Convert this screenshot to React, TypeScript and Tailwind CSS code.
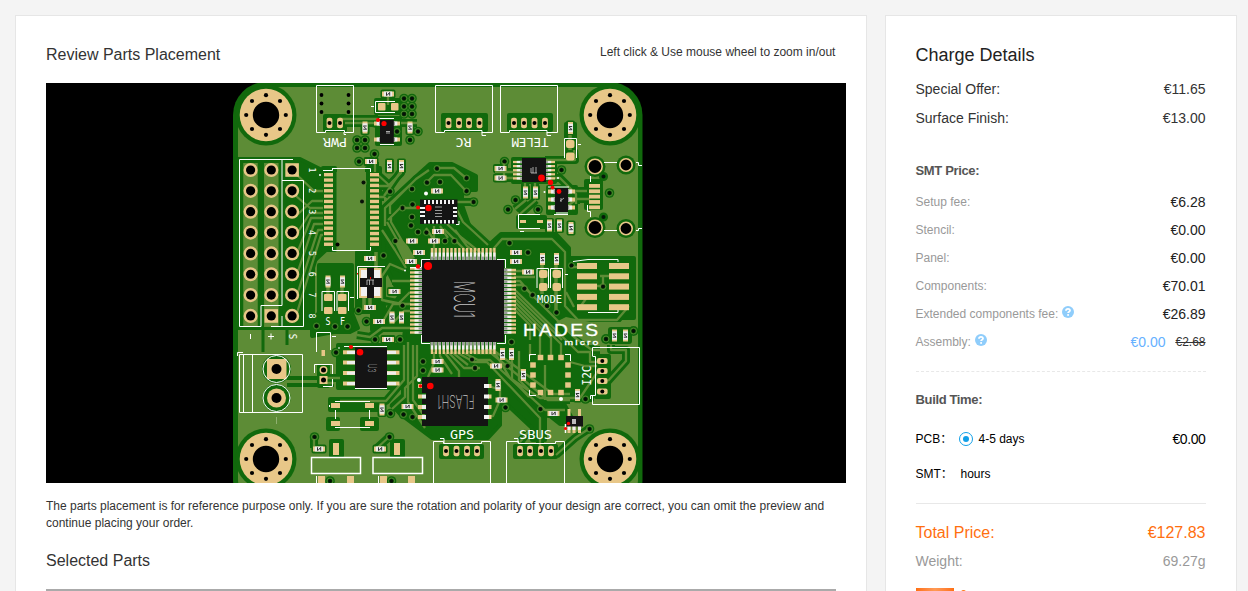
import React from 'react';

const DARK = '#11690c';
const LIGHT = '#5d8c36';
const PAD = '#e8c788';
const BODY = '#141414';

type Pt = [number, number];

const range = (n: number) => Array.from({ length: n }, (_, i) => i);

function Hole({ x, y }: { x: number; y: number }) {
  return (
    <g>
      <circle cx={x} cy={y} r={30.5} fill={DARK} />
      <circle cx={x} cy={y} r={26.3} fill={PAD} />
      <circle cx={x} cy={y} r={13.2} fill="#000" />
      {range(8).map((i) => (
        <circle key={i} cx={x + 19.8 * Math.cos((i * Math.PI) / 4)} cy={y + 19.8 * Math.sin((i * Math.PI) / 4)} r={2.1} fill="#000" />
      ))}
    </g>
  );
}

function Chip({ x, y, v }: { x: number; y: number; v?: boolean }) {
  return (
    <g transform={`translate(${x} ${y})${v ? ' rotate(90)' : ''}`}>
      <rect x={-6} y={-2.5} width={12} height={5} fill={PAD} />
      <rect x={-4.2} y={-2.5} width={8.4} height={5} fill="#ececec" />
      <path d="M-1.500 -1.700v3.400M-1 1.500L1.500 -1.500M1.700 -1.700v3.400" stroke="#333" strokeWidth={1} fill="none" />
    </g>
  );
}

function Silk({ x, y, size, w, rot = 0, color = '#fff', thin, children }: { x: number; y: number; size: number; w: number; rot?: number; color?: string; thin?: boolean; children: string }) {
  return (
    <text
      transform={`translate(${x} ${y}) rotate(${rot})`}
      textAnchor="middle"
      dominantBaseline="central"
      textLength={w}
      lengthAdjust="spacingAndGlyphs"
      fontFamily={thin ? "Inter, 'Liberation Sans', sans-serif" : "'DejaVu Sans Mono', monospace"}
      fontWeight={thin ? 200 : 400}
      fontSize={size}
      fill={color}
    >
      {children}
    </text>
  );
}

function Pin({ x, y, dir, len = 12, t = 2.4 }: { x: number; y: number; dir: number; len?: number; t?: number }) {
  return (
    <g transform={`translate(${x} ${y}) rotate(${dir})`}>
      <rect x={0} y={-t / 2} width={len} height={t} fill={PAD} />
      <rect x={0} y={-t / 2} width={len * 0.62} height={t} fill="#f0f0f0" />
      <rect x={0} y={-t / 2} width={len * 0.28} height={t} fill="#9a9a9a" />
    </g>
  );
}

const vias: Pt[] = [
  [357, 140], [365, 140], [357, 148], [365, 148], [374.5, 154], [359, 161.5], [397, 131.5], [410, 140], [418, 131.5],
  [437, 168.5], [440, 182], [412, 189], [427, 182.5], [390, 191.5], [363.5, 182.5], [362, 201.5], [402.5, 208], [412.5, 204.5],
  [466.5, 178], [466.5, 191], [473.5, 202], [504.5, 161.5], [561.5, 170], [508, 209.5], [515.5, 200], [538, 209.5],
  [412, 217], [411, 225.5], [418, 232], [426.5, 232.5], [395.5, 241], [383.5, 255.5], [358.5, 310.5], [402.5, 305.5],
  [366.5, 321.5], [316.5, 326], [335, 326.5], [347.5, 326.5], [375, 339.5], [400, 339.5], [336, 352.5],
  [509.5, 243], [528, 252.5], [524.5, 288.5], [532.5, 295], [547, 306], [556.5, 312.5], [571.5, 265.5], [603, 286.5],
  [445, 241], [454.5, 241], [606, 339], [633.5, 331], [511.5, 342], [472, 359.5], [475, 368], [507.5, 366],
  [423, 361.5], [423, 370.5], [390.5, 413.5], [403.5, 414.5], [412.5, 417], [314.5, 437], [389.5, 437],
  [505.5, 407.5], [540.5, 409], [585.5, 399], [589.5, 429], [609.5, 193],
  [404, 98.5], [412, 98.5], [404, 106.5], [412, 106.5], [404, 114], [412, 114], [330, 481], [391.5, 481],
];

const chips: [number, number, boolean?][] = [
  [388, 94], [365, 127.5, true], [410, 127.5, true], [371, 161.5], [389.5, 166, true], [401.5, 166, true],
  [570.5, 128, true], [500.5, 168.5], [500.5, 178], [525.5, 192.5, true], [535.5, 192.5, true], [437, 191],
  [370, 258.5], [328, 281.5, true], [342.5, 281.5, true], [394.5, 291.5], [370, 307.5], [379, 321.5], [392, 317.5, true], [401.5, 317.5, true],
  [388, 339.5], [412, 241], [434, 241], [419, 252.5], [411, 261.5], [438, 231.5], [516, 252.5], [516, 261.5], [528, 272],
  [542.5, 259, true], [556.5, 259, true], [549.5, 225.5, true], [559.5, 225.5, true], [571, 228, true],
  [614.5, 335.5, true], [625.5, 335.5, true], [437.5, 361.5], [437.5, 370], [502.5, 354, true], [511.5, 354, true],
  [496, 366], [523.5, 375, true], [498, 385, true], [501.5, 400], [577.5, 395, true], [553.5, 413.5],
  [382, 409.5, true], [407.5, 406.5], [319, 449], [380, 449],
];

const darkAreas = [
  'M238 159H300L326 172V250L313 262V328H238Z',
  'M323 168H335V250H323ZM367 168H380V250H367Z',
  'M382 222V210L420 173L430 164H452L476 176V190H462V205L470 228L489 245L501 234H556L569 248V258H572V320H560L552 323L585 350H592V372H520L403 345L405 330H372V310H390L400 295L385 265Z',
  'M403 340H592V400H562L575 424H560L545 412V440H532V428L500 398V425L488 438H432L400 414L392 405L403 395Z',
  'M319 265H352V313L358 328L350 332H334L312 336V320L319 313Z',
  'M357 252H384V312H357Z',
  'M570 258H634V318H570Z',
  'M338 345H400V388H338Z',
  'M330 399H380V410H330ZM328 419H338V429H328ZM362 419H377V429H362Z',
  'M443 115H486V130H443ZM509 115H551V130H509ZM325 116H345V130H325Z',
  'M441 446H482V457H441ZM515 446H556V457H515Z',
  'M596 356H609V397H596Z',
  'M376 100H400V113H376ZM377 118H400V144H377Z',
  'M513 159H555V182H513ZM548 187H576V213H548ZM566 124H575V159H566Z',
  'M586 181H601V208H586ZM518 217H545V227H518Z',
  'M331 441H342V456H331ZM392 441H403V456H392Z',
  'M319 366H328V386H319Z',
];

const traces = [
  'M296 174L314 191H323M296 196L310 208H323M296 216L312 201H323M296 235L310 213H323M296 256L311 218H323',
  'M296 277L314 224H323M296 298L318 230H323M296 316L321 235H323',
  'M378 175L389 185L401 173M378 186H388L401 173V160M378 197H384',
  'M455 230L467 246L478 255M444 229L466 251M447 224L462 238L486 257M489 254L502 239H552L565 252V306L578 320H617L629 306',
  'M437 168H454L466 178M427 182L434 175H451L466 191M390 214V205L416 179L429 170M385 226V208L412 183',
  'M434 226V258M440 226L448 238M426 228L434 240V250M457 202H473M457 210L463 222L474 232L488 245',
  'M382 230L395 250L406 268M387 222L404 252L411 262M391 216V222L412 258M420 208H400L388 220',
  'M506 271H528M514 277H535M514 281H520L531 294M514 285H522L574 337L592 350H600M514 289L578 352H590V362H602M514 293L562 340M514 297L561 344V356M514 301L551 338V356M514 305L540 331V356M514 309L530 325V340',
  'M434 352V363L428 377M440 352V356L452 374M444 352L459 371V378M448 352L464 368H480M452 352L468 365M456 352L474 362H487L540 418V450',
  'M462 352L478 360H490L545 410H565M466 352L491 353L548 400H570M470 352L493 350L553 394H570M474 353H495L510 378L540 398H580L598 371',
  'M512 355V379L529 397M519 351V380L530 391M530 344V356M545 365V400M611 339V350H626V361L608 381M570 362L585 366H597',
  'M404 270L390 264L382 276V300L402 304H411M410 281H392M410 292L398 304L385 301M410 304H393L382 323M410 311H404L393 323M410 328H382L370 337L357 335',
  'M408 342V402L425 428M413 345V400L430 424H450M417 345V376L405 388V397L392 409M404 345V380L386 401H340M489 386L500 390M489 416H493L500 400V385',
  'M345 123H373L386 126M340 119H378M401 123H417M388 95V105',
  'M375 172V162M401 171L384 196M545 160H575L574 150M544 178H560L576 194V204M566 191H587M566 207L577 199H590',
  'M525 193V183M535 193V183M526 200L515 209M536 200L520 214M504 162V178M495 172H522M495 178H522',
  'M578 267H571M588 286H603V276M588 296L580 307M566 292L574 307M600 276H610',
  'M314 437V448M389 437L377 448M340 378H320M334 383H326M556 455L575 438L590 428M528 432L520 442',
];

const smallPads: Pt[] = [
  [540.5, 357.5], [550.5, 357.5], [561, 357.5], [540.5, 392.5], [550.5, 392.5], [561, 392.5],
  [533, 365], [533, 375], [533, 385], [568, 365], [568, 375], [568, 385],
];

function Board() {
  return (
    <svg className="block h-[400px] w-[800px] shrink-0 bg-black" viewBox="46 83 800 400" fill="none">
      <rect x={233} y={82} width={409.5} height={430} rx={33} fill={DARK} />
      <rect x={238} y={87} width={400} height={420} rx={28} fill={LIGHT} />
      {darkAreas.map((d, i) => <path key={i} d={d} fill={DARK} stroke={DARK} strokeWidth={4} strokeLinejoin="round" />)}
      {traces.map((d, i) => <path key={i} d={d} stroke={DARK} strokeWidth={8} strokeLinejoin="round" />)}
      <path d="M287 378H322M287 385H322" stroke={DARK} strokeWidth={4} />
      <path d="M263 328V352M287 330L287 345M580 326" stroke={DARK} strokeWidth={3} />
      {chips.map(([x, y, v], i) => <rect key={i} x={x - (v ? 4.5 : 7.5)} y={y - (v ? 7.5 : 4.5)} width={v ? 9 : 15} height={v ? 15 : 9} rx={2} fill={DARK} />)}
      {vias.map(([x, y], i) => <circle key={i} cx={x} cy={y} r={4.8} fill={DARK} />)}
      <path d="M336.500 172H366V250H336.500ZM395 243L400 238L408 246L415 258L404 262ZM556 322L566 317L590 322H638V345H590Z" fill={LIGHT} />
      <path d="M250.500 163V327M271.300 163V327" stroke={LIGHT} strokeWidth={14.500} />
      {traces.map((d, i) => <path key={i} d={d} stroke={LIGHT} strokeWidth={2.3} strokeLinejoin="round" />)}
      <path d="M328 286V300M342 286V300M542 262V294M556 262V310M570 135V150M370 288V308M364 296V310M376 252V268" stroke={LIGHT} strokeWidth={3.500} />
      <circle cx={606} cy={339} r={5} fill={DARK} />
      <circle cx={633.5} cy={331} r={5} fill={DARK} />
      <rect x={608} y={327} width={24} height={17} rx={3} fill={DARK} />
      {vias.map(([x, y], i) => (
        <g key={i}>
          <circle cx={x} cy={y} r={3} stroke={LIGHT} strokeWidth={0.8} />
          <circle cx={x} cy={y} r={2} fill="#071007" />
        </g>
      ))}
      <Hole x={266} y={115} />
      <Hole x={610} y={115} />
      <Hole x={266} y={459} />
      <Hole x={610} y={459} />

      {/* Servo header */}
      {range(8).map((r) =>
        [250.6, 271.3, 292.1].map((x, c) => {
          const y = 170 + r * 20.85;
          const sq = (r === 0 && c === 2) || (r === 7 && c === 1);
          return (
            <g key={`${r}-${c}`}>
              {sq ? <rect x={x - 6.8} y={y - 6.8} width={13.6} height={13.6} fill={PAD} /> : <circle cx={x} cy={y} r={7.1} fill={PAD} />}
              <circle cx={x} cy={y} r={4.6} fill="#000" />
            </g>
          );
        }),
      )}
      {range(8).map((i) => <Silk key={i} x={312} y={170 + i * 20.85} size={9} w={5} rot={90}>{String(i + 1)}</Silk>)}
      <path d="M293 159.5H239.5V326.5H261V305.5H282V159.5M282 180.5H303.5V326.5H271M282 316V326" stroke="#fff" />
      <path d="M250.5 334V339M268 336.500H274M271 333.5V339.5" stroke="#fff" />
      <Silk x={292} y={336.5} size={10} w={5.5} rot={90}>S</Silk>

      {/* Flat cable connector */}
      {range(14).map((i) => (
        <g key={i} fill={PAD}>
          <rect x={324} y={173 + i * 5.35} width={9} height={3.4} />
          <rect x={370} y={173 + i * 5.35} width={9} height={3.4} />
        </g>
      ))}
      <path d="M323 170.5H332.5V169M332 168.500H370.500V172M332.500 247V250.500H370.500V247" stroke="#fff" />
      <circle cx={337.5} cy={244.5} r={2} fill="#000" />
      <circle cx={320} cy={175} r={1} fill="#fff" />

      {/* Pin connectors */}
      {[448.5, 459, 469, 479.5, 514, 524, 534.5, 545, 329.5, 340].map((x) => (
        <g key={x}>
          <rect x={x - 2.9} y={117.7} width={5.8} height={10.6} rx={2} fill={PAD} />
          <circle cx={x} cy={123} r={2} fill="#000" />
        </g>
      ))}
      {[446, 456.5, 467, 477, 520, 530, 541, 551].map((x) => (
        <g key={x}>
          <rect x={x - 2.9} y={445.7} width={5.8} height={10.6} rx={2} fill={PAD} />
          <circle cx={x} cy={451} r={2} fill="#000" />
        </g>
      ))}
      {[361, 371, 381, 391.5].map((y) => (
        <g key={y}>
          <rect x={597} y={y - 2.9} width={10.6} height={5.8} rx={2} fill={PAD} />
          <circle cx={602.3} cy={y} r={2} fill="#000" />
        </g>
      ))}
      <path d="M444 132.500H435.500V85.500H492.500V132.500H482V130.500H444.500V132.500M482 132V135.500H486" stroke="#fff" />
      <path d="M509 132.500H500.500V85.500H557.500V132.500H547V130.500H509.500V132.500M547 132V135.500H551" stroke="#fff" />
      <path d="M325.500 132.500H316.500V85.500H353.500V132.500H344.500V130.500H325.500V132.500M344 132V134.500H346" stroke="#fff" />
      <path d="M433.500 484V441.500H443.500V443.500H481.500V441.500H490.500V484M444 443V438.500H440" stroke="#fff" />
      <path d="M506.500 484V441.500H518.500V443.500H555.500V441.500H564.500V484M518 443V438.500H514" stroke="#fff" />
      <path d="M592.500 356V347.500H639.500V404.500H592.500V395.500H595.500V356.500H592.500M595 395.500H590.500V399" stroke="#fff" />
      {[321.5, 348.5].map((x) => [95, 103.5, 112].map((y) => <circle key={`${x}${y}`} cx={x} cy={y} r={1.9} fill="#000" />))}
      <Silk x={335} y={141.500} size={12} w={24} rot={180}>PWR</Silk>
      <Silk x={463.5} y={141.500} size={12} w={16} rot={180}>RC</Silk>
      <Silk x={530} y={141.500} size={12} w={37} rot={180}>TELEM</Silk>
      <Silk x={462} y={434.500} size={12} w={24}>GPS</Silk>
      <Silk x={535.5} y={434.500} size={12} w={33}>SBUS</Silk>
      <Silk x={586.5} y={375.500} size={13} w={20} rot={-90}>I2C</Silk>

      {/* Terminal block */}
      <circle cx={276.5} cy={369} r={14.5} fill={DARK} />
      <circle cx={276.500} cy={398} r={14} fill={DARK} />
      <rect x={267} y={359} width={19.500} height={20} fill={PAD} />
      <circle cx={276.500} cy={398} r={9.500} fill={PAD} />
      <circle cx={276.500} cy={369} r={5} fill="#000" />
      <circle cx={276.500} cy={398} r={5} fill="#000" />
      <circle cx={276.500} cy={369} r={13.500} stroke="#fff" />
      <circle cx={276.500} cy={398} r={13.500} stroke="#fff" />
      <path d="M239.500 354.500H302.500V412.500H239.500ZM243.500 354V412M252.500 354V412M237.500 356V352.500H243" stroke="#fff" />
      <path d="M276.500 417V424" stroke="#8fb070" />

      {chips.map(([x, y, v], i) => <Chip key={i} x={x} y={y} v={v} />)}

      {/* Solder jumpers */}
      <g fill={PAD}>
        <rect x={324} y={294} width={8.500} height={7} rx={1} /><rect x={324} y={307} width={8.500} height={7} rx={1} />
        <rect x={338} y={294} width={8.500} height={7} rx={1} /><rect x={338} y={307} width={8.500} height={7} rx={1} />
        <rect x={539} y={270} width={8.500} height={8} rx={2} /><rect x={539} y={283} width={8.500} height={8} rx={2} />
        <rect x={552.500} y={270} width={8.500} height={8} rx={2} /><rect x={552.500} y={283} width={8.500} height={8} rx={2} />
        <rect x={566} y={140} width={8.500} height={8} rx={2} /><rect x={566} y={152.500} width={8.500} height={8} rx={2} />
        <rect x={378} y={103} width={7.500} height={7.500} rx={1} /><rect x={391} y={103} width={7.500} height={7.500} rx={1} />
        <rect x={319.500} y={366} width={8} height={8} rx={4} /><rect x={319.500} y={376} width={8} height={8} />
        <rect x={321.500} y={350} width={3.500} height={6} />
        <rect x={333} y={443} width={6} height={12} /><rect x={394} y={443} width={6} height={12} />
        <rect x={318} y={476} width={7} height={8} /><rect x={347} y={476} width={7} height={8} />
        <rect x={380} y={476} width={7} height={8} /><rect x={408} y={476} width={7} height={8} />
        <rect x={331} y={403} width={9} height={5} /><rect x={365} y={403} width={9} height={5} />
        <rect x={331} y={421} width={9} height={5} /><rect x={365} y={421} width={9} height={5} />
        <rect x={520} y={220} width={6} height={3} /><rect x={537} y={220} width={6} height={3} />
      </g>
      <path d="M322 311V291.500H334.500V311M337 311V291.500H348.500V311M350 297.500H354M537 288V268.500H548.500V288M550.500 288V268.500H562.500V288M565 274.500H568M564.500 158V138.500H576.500V158M578 144.500H581M395 101.500H375.500V112.500H395M371 106.500H374" stroke="#fff" />
      <path d="M316.500 352V332.500H330.500V350M332 336.500H336M314.500 373V364.500H332.500V374M323 386.500H332.500V379" stroke="#fff" />
      <circle cx={323.500} cy={370} r={2.500} fill="#000" /><circle cx={323.500} cy={380} r={2.500} fill="#000" />
      <path d="M311.500 457.500H360.500V473.500H311.500ZM373 457.500H422.500V473.500H373Z" stroke="#fff" strokeWidth={1.500} />
      <path d="M316.500 476V484M378.500 476V484M335 401.500H370M335 427.500H370M335.500 410V419M369.500 410V419M329.500 405V407" stroke="#fff" />
      <Silk x={328} y={321.500} size={10} w={5}>S</Silk>
      <Silk x={342.500} y={321.500} size={10} w={5}>F</Silk>
      <Silk x={549.500} y={299} size={10} w={25}>MODE</Silk>
      <path d="M540 214.500H518.500V228.500H540M520 231.500H524M554 214.500H568" stroke="#fff" />

      {/* Debug header */}
      {range(5).map((i) => (
        <g key={i} fill={PAD}>
          <rect x={577} y={263 + i * 10.300} width={20} height={6} />
          <rect x={609} y={263 + i * 10.300} width={20} height={6} />
        </g>
      ))}
      <path d="M573 261.500L588 259.500H618V262M588 312.500H618V310" stroke="#fff" />

      {/* USB receptacle */}
      {([[595, 166.5, 6.500], [626, 165, 5.500], [595, 227.500, 6.500], [626, 228.500, 5.500]] as const).map(([x, y, r]) => (
        <g key={`${x}-${y}`}>
          <circle cx={x} cy={y} r={r + 4} fill={DARK} />
          <circle cx={x} cy={y} r={r + 0.700} fill="#000" stroke={PAD} strokeWidth={1.600} />
        </g>
      ))}
      {range(5).map((i) => <rect key={i} x={589} y={184 + i * 5.350} width={11} height={3.800} fill={PAD} />)}
      <circle cx={603.500} cy={176.500} r={3.300} fill="#06190a" stroke={DARK} strokeWidth={2.500} />
      <circle cx={603.500} cy={217} r={3.300} fill="#06190a" stroke={DARK} strokeWidth={2.500} />
      <path d="M604 162.500H617M636 162.500H638.500V165.500H642M604 230.500H617M636 230.500H638.500V228.500H642M590.500 176V182M587.500 205V211.500H590.500V217" stroke="#fff" />

      {/* Small packages */}
      {[123.5, 139.500].map((y) => <g key={y}><Pin x={381} y={y} dir={180} len={7} t={4} /><Pin x={393} y={y} dir={0} len={7} t={4} /></g>)}
      <rect x={380} y={120} width={13.800} height={23.500} fill={BODY} />
      <path d="M379 118.500H394M380 144.500H394M548 187H569M556 213H568" stroke="#fff" />
      <path d="M386 131.500H390M386 133H390" stroke="#aaa" />
      {range(5).map((i) => <g key={i}><Pin x={523} y={162 + i * 4.100} dir={180} len={10} t={2.200} /><Pin x={545} y={162 + i * 4.100} dir={0} len={10} t={2.200} /></g>)}
      <rect x={522} y={158} width={24} height={24} fill={BODY} />
      <path d="M531 173V168M533 173V167M536 173V167M531 173H537" stroke="#ccc" strokeWidth={0.800} />
      {[191.5, 199.500, 207.500].map((y) => <g key={y}><Pin x={556} y={y} dir={180} len={8} t={4} /><Pin x={567} y={y} dir={0} len={8} t={4} /></g>)}
      <rect x={555} y={188} width={13} height={24} fill={BODY} />
      <path d="M560 201L564 198M561 198V202" stroke="#ccc" strokeWidth={0.800} />

      <rect x={420} y={199.500} width={37.500} height={24.500} fill={BODY} />
      {range(8).map((i) => <path key={i} d={`M${425 + i * 4} 200v4M${425 + i * 4} 220v3.500`} stroke="#f2f2f2" strokeWidth={2} />)}
      {[208, 212, 216].map((y) => <path key={y} d={`M420 ${y}h5M453 ${y}h4`} stroke="#f2f2f2" strokeWidth={1.800} />)}
      <path d="M435 207H442M435 210.500H442M435 213.500H442M435 216.500H442" stroke="#bbb" strokeWidth={0.800} />
      <path d="M456 224.500H459V221" stroke="#fff" />

      <g>
        <rect x={359} y={268} width={22.500} height={30} fill={PAD} />
        <rect x={361} y={270} width={19} height={26} fill="#f1f1f1" />
        <path d="M360 278H382V287H374V298H367V287H360ZM367 268H374V280H367Z" fill={BODY} />
        <path d="M367 280V285M369.500 280V285M373 280V285M367 280H374" stroke="#ccc" strokeWidth={0.800} />
        <path d="M357.500 299V266.500H385" stroke="#fff" />
        <path d="M370.500 277V279M357.500 273V274.500" stroke="#f00" />
      </g>

      {/* Regulator */}
      {[352.3, 362.500, 373, 383.500].map((y) => (
        <g key={y}>
          <rect x={343} y={y - 2} width={12} height={4} fill={PAD} /><rect x={347} y={y - 1.500} width={9} height={3.200} fill="#eee" />
          <rect x={387} y={y - 2} width={12.500} height={4} fill={PAD} /><rect x={387} y={y - 1.500} width={9} height={3.200} fill="#eee" />
        </g>
      ))}
      <rect x={355} y={347.500} width={32} height={41} fill={BODY} />
      <path d="M344 346.500H387M355 388.500H387M338 348H340" stroke="#fff" />
      <Silk x={371.5} y={368} size={11} w={9} rot={90} color="#ccc" thin>U3</Silk>

      {/* Microcontroller */}
      {range(17).map((i) => (
        <g key={i}>
          <Pin x={422} y={268.500 + i * 4} dir={180} />
          <Pin x={504} y={270 + i * 3.900} dir={0} />
          <Pin x={432 + i * 3.900} y={260} dir={-90} />
          <Pin x={432 + i * 3.900} y={342} dir={90} />
        </g>
      ))}
      <rect x={422} y={260} width={82} height={82} fill={BODY} />
      <path d="M410 267.500H421M421.500 267V259.500H430M497 259.500H505.500V268M505.500 335V343.500H497M421.500 335V343.500H430" stroke="#fff" />
      <Silk x={463.5} y={299.500} size={28} w={37} rot={90} color="#c4c4c4" thin>MCU1</Silk>

      {/* Flash memory */}
      {[386, 396.500, 407, 417].map((y) => (
        <g key={y}>
          <rect x={418} y={y - 2} width={4} height={4} fill={PAD} /><rect x={422} y={y - 2} width={4} height={4} fill="#eee" />
          <rect x={488} y={y - 2} width={3.500} height={4} fill={PAD} />
        </g>
      ))}
      <path d="M426 377H488V426H422V420H426V414H422V410H426V404H422V399H426V393H422V377Z" fill={BODY} />
      {[386, 396.500, 407, 417].map((y) => <rect key={y} x={484} y={y - 2} width={5} height={4} fill="#f4f4f4" />)}
      <Silk x={456} y={401} size={18} w={37} rot={180} color="#c4c4c4" thin>FLASH1</Silk>

      {/* Barometer */}
      {smallPads.map(([x, y]) => <rect key={`${x}-${y}`} x={x - 2.800} y={y - 2.700} width={5.600} height={5.400} fill={PAD} />)}
      <path d="M529.500 361V354.500H536M565 354.500H570.500V361M529.500 390V395.500H536" stroke="#fff" />
      <circle cx={561} cy={399} r={2} fill="#fff" />

      {[569, 574, 579.500].map((x, i) => (
        <g key={x}>
          {i !== 1 && <rect x={x - 1.500} y={409} width={3} height={7} fill={PAD} />}
          <rect x={x - 1.500} y={426} width={3} height={7} fill={PAD} />
          <rect x={x - 1.500} y={426} width={3} height={4} fill="#eee" />
        </g>
      ))}
      <rect x={566} y={416} width={17} height={10.500} fill={BODY} />
      <rect x={572} y={419} width={4} height={5} fill="#bbb" />
      <path d="M565.500 424V433" stroke="#fff" strokeWidth={1.500} />

      {/* Pin one markers */}
      {([[378, 120, 2.100], [384, 123.500, 2.600], [541.500, 178, 3.400], [550.500, 182.500, 2.700], [552.500, 187.500, 2], [559, 191.500, 2.400], [418, 207.500, 2], [428.500, 208, 3.200], [418, 266.500, 2.200], [428, 266, 4.100], [351, 347, 2.100], [360, 352.300, 3.300], [420.500, 386, 1.700], [430.300, 386, 3.300], [568.500, 423.500, 1.700], [565.500, 428.500, 1.600]] as const).map(([x, y, r]) => (
        <circle key={`${x}-${y}`} cx={x} cy={y} r={r} fill="#f00" />
      ))}
      <g fill="#fff">
        <circle cx={426} cy={193.500} r={2} /><circle cx={419} cy={380} r={2} /><circle cx={558} cy={178} r={1} /><circle cx={405} cy={270.500} r={1} /><circle cx={544.500} cy={192} r={1} />
      </g>

      <g fill="#fff" stroke="#fff" strokeWidth={0.3} fontFamily="'Liberation Sans', Arial, sans-serif">
        <text transform="translate(523 336) scale(1.2 1)" fontSize={16} textLength={62.5} lengthAdjust="spacing">HADES</text>
        <text transform="translate(564.500 345) scale(1.3 1)" fontSize={8} textLength={26} lengthAdjust="spacing">micro</text>
      </g>
    </svg>
  );
}

function HelpIcon() {
  return (
    <svg className="ml-1 size-3" viewBox="0 0 12 12" fill="none">
      <circle cx={6} cy={6} r={6} fill="#8fcdfb" />
      <path d="M4 4.700C4 2.300 8 2.300 8 4.600C8 5.800 6.100 5.700 6.100 7.100" stroke="#fff" strokeWidth={1.800} />
      <rect x={5.200} y={8.100} width={1.800} height={1.700} fill="#fff" />
    </svg>
  );
}

function Fee({ label, value, help }: { label: string; value: string; help?: boolean }) {
  return (
    <div className="flex h-7 items-center justify-between">
      <span className="flex items-center text-xs text-[#999]">
        {label}
        {help && <span className="-mt-[4px]"><HelpIcon /></span>}
      </span>
      <span className="text-sm text-[#222]">{value}</span>
    </div>
  );
}

export default function App() {
  return (
    <div className="flex h-[591px] items-start gap-[18px] overflow-hidden bg-[#f4f4f4] pl-[15px] pt-[15px] font-['Liberation_Sans',Arial,'Noto_Sans_CJK_SC',sans-serif] text-[#333]">
      <main className="h-[620px] w-[852px] shrink-0 border border-[#e6e6e6] bg-white px-[30px]">
        <div className="flex h-[67px] justify-between pt-[27px]">
          <h1 className="text-base leading-6">Review Parts Placement</h1>
          <p className="mr-[-46px] w-[282px] text-xs leading-[19px]">Left click &amp; Use mouse wheel to zoom in/out</p>
        </div>
        <Board />
        <p className="w-[795px] pt-[15px] text-xs leading-[17px]">
          The parts placement is for reference purpose only. If you are sure the rotation and polarity of your design are correct, you can omit the preview and continue placing your order.
        </p>
        <h2 className="mt-[17px] text-base leading-6">Selected Parts</h2>
        <div className="mt-4 h-[30px] border-t-2 border-[#aaa]" />
      </main>

      <aside className="h-[620px] w-[352px] shrink-0 border border-[#e6e6e6] bg-white pl-[29.5px] pr-[30.5px] pt-[26px]">
        <h2 className="text-lg leading-[26px] text-[#222]">Charge Details</h2>
        <div className="mt-[6px] flex h-[29px] items-center justify-between text-sm"><span>Special Offer:</span><span>€11.65</span></div>
        <div className="flex h-[29px] items-center justify-between text-sm"><span>Surface Finish:</span><span>€13.00</span></div>
        <h3 className="mt-[29px] h-[27px] text-[13px] font-bold leading-[20px] tracking-[-0.35px] text-[#555]">SMT Price:</h3>
        <Fee label="Setup fee:" value="€6.28" />
        <Fee label="Stencil:" value="€0.00" />
        <Fee label="Panel:" value="€0.00" />
        <Fee label="Components:" value="€70.01" />
        <Fee label="Extended components fee:" value="€26.89" help />
        <div className="flex h-7 items-center justify-between">
          <span className="flex items-center text-xs text-[#999]">Assembly:<span className="-mt-[4px]"><HelpIcon /></span></span>
          <span className="flex items-center gap-[10px]"><span className="text-sm text-[#66b1ff]">€0.00</span><del className="text-xs text-[#333]">€2.68</del></span>
        </div>
        <div className="mt-[15px] border-t border-dashed border-[#e8e8e8]" />
        <h3 className="mt-[18px] text-[13px] font-bold leading-5 tracking-[-0.35px] text-[#555]">Build Time:</h3>
        <div className="mt-[19px] flex h-5 items-center text-xs text-black">
          <span className="w-[43px]">PCB：</span>
          <span className="flex size-[14px] items-center justify-center rounded-full border border-[#109fe8]"><span className="size-[6px] rounded-full bg-[#109fe8]" /></span>
          <span className="ml-1.5">4-5 days</span>
          <span className="ml-auto text-sm tracking-[-0.4px]">€0.00</span>
        </div>
        <div className="mt-[15px] flex h-5 items-center text-xs text-black"><span className="w-[45px]">SMT：</span><span>hours</span></div>
        <div className="mt-[19px] border-t border-[#e8e8e8]" />
        <div className="mt-[17px] flex h-6 items-center justify-between text-base text-[#ff6f0f]"><span>Total Price:</span><span>€127.83</span></div>
        <div className="mt-[6px] flex h-5 items-center justify-between text-sm text-[#999]"><span>Weight:</span><span>69.27g</span></div>
        <div className="mt-[17px] flex gap-[7px]">
          <div className="h-5 w-[38px] bg-linear-to-r from-[#ff6f0f] via-[#ff9a55] to-[#ff6f0f]" />
          <div className="mt-[2px] h-4 w-[5px] rounded-t-sm bg-[#ff7a1a]" />
        </div>
      </aside>
    </div>
  );
}
